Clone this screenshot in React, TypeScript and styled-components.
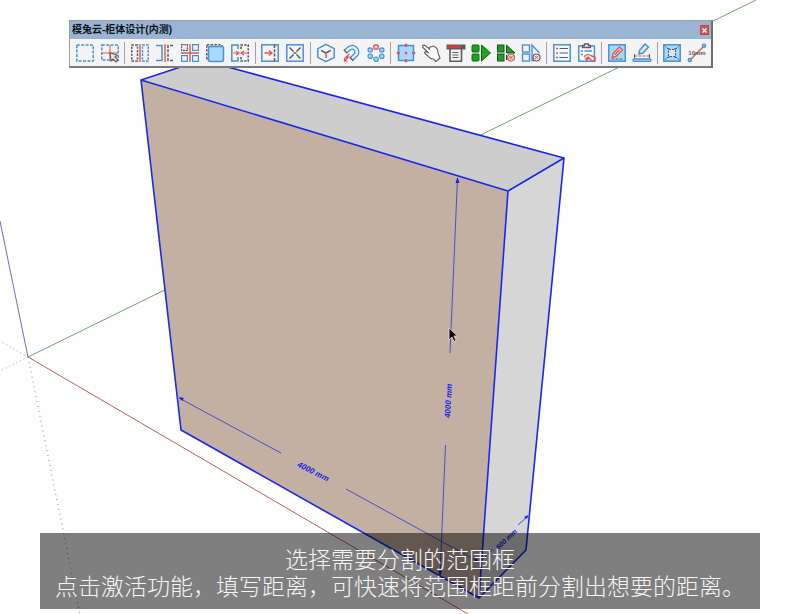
import React from "react";
import styled, { createGlobalStyle } from "styled-components";

const GlobalStyle = createGlobalStyle`
  * { box-sizing: border-box; }
  body {
    margin: 0;
    background: #fefefe;
    font-family: "Liberation Sans", "Noto Sans CJK SC", sans-serif;
  }
`;

const BLUE = "#4a90d9";
const DARK = "#5c5c60";
const RED = "#e2554d";
const PALE = "#a9d8ff";
const GREEN = "#16a51c";

const Viewport = styled.main`
  position: relative;
  display: flex;
  flex-direction: column;
  justify-content: space-between;
  min-height: 100vh;
  padding: 20px 40px 5px;
  overflow: hidden;
`;

const SceneCanvas = styled.svg`
  position: absolute;
  inset: 0;
  width: 100%;
  height: 100%;
`;

const ToolWindow = styled.section`
  position: relative;
  margin: 0 47px 0 29px;
  border: 1px solid #9a9ea5;
  border-right: 2px solid #6a6e75;
  border-bottom: 2px solid #777b81;
  background: #f4f4f5;
`;

const TitleBar = styled.header`
  display: flex;
  align-items: center;
  justify-content: space-between;
  height: 18px;
  padding: 0 2px;
  background: #9ab5d3;
`;

const Title = styled.h1`
  margin: 0;
  color: #0c1118;
  font-size: 10px;
  font-weight: 700;
  line-height: 18px;
  white-space: nowrap;
`;

const CloseButton = styled.button`
  display: grid;
  place-items: center;
  width: 9px;
  height: 10px;
  padding: 0;
  border: 1px solid #b94a44;
  background: #d2544b;
`;

const ToolStrip = styled.div`
  display: flex;
  align-items: center;
  justify-content: space-between;
  height: 27px;
  padding: 0 1px 0 2px;
`;

const ToolButton = styled.button`
  display: grid;
  place-items: center;
  width: 25px;
  height: 25px;
  padding: 0;
  border: 0;
  background: transparent;

  &:hover { background: #dbe9f8; }
`;

const Separator = styled.span`
  width: 1px;
  height: 22px;
  margin: 0 2px;
  background: #a2a2a5;
`;

const Caption = styled.p`
  position: relative;
  margin: 0;
  padding: 12px 8px 10px;
  background: rgba(0, 0, 0, 0.5);
  color: #f6f6f6;
  font-family: "Noto Sans CJK SC", sans-serif;
  font-size: 23px;
  font-weight: 300;
  line-height: 27px;
  text-align: center;
`;

const CaptionLine = styled.span`
  display: block;
`;

type Tool = { label: string; art: React.ReactNode };

const groups: Tool[][] = [
  [
    { label: "范围框", art: <rect x="0.8" y="1" width="16.4" height="16" stroke={BLUE} strokeDasharray="3 1.4" /> },
    {
      label: "选择范围",
      art: (
        <>
          <rect x="0.8" y="1" width="16.4" height="15" stroke={BLUE} strokeDasharray="3 1.4" />
          <path d="M9 1v15M1 9h16" stroke={RED} strokeWidth="1" />
          <path d="M9 9l7 2-2 2 3 3-2 2-3-3-2 2z" fill="#eee" stroke={DARK} strokeWidth="1.2" />
        </>
      ),
    },
  ],
  [
    {
      label: "左右分割",
      art: (
        <>
          <path d="M6.5 1H0.8v16h5.7z" stroke={DARK} strokeDasharray="2.4 1.2" />
          <path d="M11.5 1h5.7v16h-5.7z" stroke={BLUE} strokeDasharray="2.4 1.2" />
          <path d="M9 0v18" stroke={RED} strokeWidth="1.4" />
        </>
      ),
    },
    {
      label: "单侧分割",
      art: (
        <>
          <path d="M0 1.5h6v15H0" stroke={BLUE} />
          <path d="M17 1.5h-5v15h5" stroke={DARK} strokeDasharray="3 1.4" />
          <path d="M9 0v18" stroke={RED} strokeWidth="1.4" />
        </>
      ),
    },
    {
      label: "四向分割",
      art: (
        <>
          <path d="M.6.6h5.8v5.8H.6z" stroke={DARK} strokeWidth="1.2" strokeDasharray="2 .8" />
          <path d="M11.6.6h5.8v5.8h-5.8zM.6 11.6h5.8v5.8H.6zM11.6 11.6h5.8v5.8h-5.8z" stroke={BLUE} strokeWidth="1.2" />
          <path d="M9 0v18M0 9h18" stroke={RED} strokeWidth="1.4" />
        </>
      ),
    },
    {
      label: "填充范围",
      art: (
        <>
          <rect x="0.8" y="0.8" width="15" height="15" stroke={DARK} strokeDasharray="2.4 1.4" />
          <rect x="2.5" y="2.5" width="15" height="15" rx="1.5" fill={PALE} stroke={BLUE} />
        </>
      ),
    },
    {
      label: "合并",
      art: (
        <>
          <path d="M7 5V1H.8v16H7v-4" stroke={BLUE} />
          <path d="M10 5V1h7.2v16H10v-4" stroke={DARK} strokeDasharray="2.4 1.2" />
          <path d="M2 9h5M16 9h-5M5 7l3 2-3 2M13 7l-3 2 3 2" stroke={RED} strokeWidth="1.2" />
        </>
      ),
    },
  ],
  [
    {
      label: "前分割",
      art: (
        <>
          <rect x="0.8" y="0.8" width="16.4" height="16.4" stroke={BLUE} />
          <path d="M13.5 1v16" stroke={DARK} strokeDasharray="3 1.3" />
          <path d="M3.5 9h7M8 6.5L11 9l-3 2.5" stroke={RED} strokeWidth="1.3" />
        </>
      ),
    },
    {
      label: "交叉",
      art: (
        <>
          <rect x="0.8" y="0.8" width="16.4" height="16.4" stroke={BLUE} />
          <path d="M3.5 3.5l4 4M10.5 10.5l4 4M14.5 3.5l-4 4M7.5 10.5l-4 4M7.5 9h3" stroke={DARK} />
        </>
      ),
    },
  ],
  [
    {
      label: "组件",
      art: (
        <>
          <path d="M9 .3l8.2 4.3v8.8L9 17.7.8 13.4V4.6z" stroke={BLUE} />
          <path d="M9 9L4 6.4M9 9l5-2.6" stroke={DARK} />
          <path d="M9 9v5" stroke={RED} />
        </>
      ),
    },
    {
      label: "吸附",
      art: (
        <>
          <path d="M3.5 7.5L8 3.8A4.8 4.8 0 0 1 14.3 10.3L9.5 15" stroke={BLUE} strokeWidth="5" />
          <path d="M4 7L8 3.8A4.8 4.8 0 0 1 14.3 10.3L10 14.5" stroke="#e3f3ff" strokeWidth="2.4" />
          <path d="M1.8 5.6l3.3 3.8M7.8 13.2l3.4 3.6" stroke={DARK} strokeWidth="1.3" />
          <path d="M7.5 10L3.5 13.5l3-.5-4 4M2.5 14v3h3" stroke={RED} strokeWidth="1.2" />
        </>
      ),
    },
    {
      label: "阵列",
      art: (
        <>
          {[[3.2, 6], [3.2, 12.2], [9, 15.2], [14.8, 12.2], [14.8, 6]].map(([x, y]) => (
            <circle key={`${x}-${y}`} cx={x} cy={y} r="2.2" fill={PALE} stroke={BLUE} strokeWidth="1.2" />
          ))}
          <circle cx="9" cy="3" r="2.4" fill="#f7cfcb" stroke={RED} strokeWidth="1.2" />
        </>
      ),
    },
  ],
  [
    {
      label: "控制点",
      art: (
        <>
          <rect x="1.5" y="1.5" width="15" height="15" fill={PALE} stroke={BLUE} />
          <path d="M8 0h2v2.5H8zM8 15.5h2V18H8zM0 8h2.500v2H0zM15.500 8H18v2h-2.500zM8 8h2v2H8z" fill={RED} stroke={RED} strokeWidth=".5" />
        </>
      ),
    },
    {
      label: "拾取",
      art: <path d="M1 1.5c1-1 2 0 3 .8L7.500 5C7 3.500 8 2.500 9 3l2-1 2 1c2 1 3 3 3 6l2 5-4 3.500-2.500-2.500c-3 0-4-1-5.500-3L3 9.500C2 8.500 3 7.500 4.200 8L6 8.500 1.500 4C.5 3 .5 2 1 1.500z" fill="#fff" stroke={DARK} strokeWidth="1.1" />,
    },
    {
      label: "属性面板",
      art: (
        <>
          <path d="M3 5v12.200h11.500V5" stroke={DARK} strokeWidth="1.6" />
          <path d="M-.5.500h19v5h-19z" fill={DARK} stroke="none" />
          <path d="M.5 1.500H14V4H.5z" fill="#dc3a32" stroke="none" />
          <path d="M5.500 8.500h6M5.500 11h6M5.500 13.500h6" stroke={DARK} strokeWidth="1.1" />
        </>
      ),
    },
    {
      label: "批量生成",
      art: (
        <g fill={GREEN} stroke="#146319" strokeWidth="1">
          <rect x="0" y="1" width="7" height="7" rx="1" />
          <rect x="0" y="10" width="7" height="7" rx="1" />
          <path d="M9.5 1l9 8-9 8z" />
        </g>
      ),
    },
    {
      label: "停止生成",
      art: (
        <>
          <g fill={GREEN} stroke="#2b4a2b" strokeWidth="1">
            <rect x="0.5" y="1" width="6.500" height="7" />
            <rect x="0.5" y="10" width="6.500" height="7" />
            <path d="M9.500 1l8.500 8H9.500zM9.500 11v5" />
          </g>
          <circle cx="14" cy="13.5" r="3.5" fill="#f6cac5" stroke="#b46b68" strokeWidth="1.2" />
          <path d="M12.500 12l3 3M15.500 12l-3 3" stroke={RED} strokeWidth="1" />
        </>
      ),
    },
    {
      label: "取消生成",
      art: (
        <>
          <g stroke={BLUE} strokeWidth="1.4">
            <rect x="0.5" y="1" width="7" height="7" />
            <rect x="0.5" y="10" width="7" height="7" />
            <path d="M12 16.500H10V1l7.500 8" />
          </g>
          <circle cx="14.5" cy="13.5" r="3.5" fill="#f8e7e5" stroke={DARK} strokeWidth="1.2" />
          <path d="M13 12l3 3M16 12l-3 3" stroke={RED} strokeWidth="1" />
        </>
      ),
    },
  ],
  [
    {
      label: "列表",
      art: (
        <>
          <rect x="0.8" y="0.8" width="16.4" height="16.4" fill="#f4fbff" stroke={BLUE} />
          <path d="M3 4.500h2M3 9h2M3 13.500h2" stroke={RED} />
          <path d="M6.500 4.500H15M6.500 9H15M6.500 13.500H15" stroke={DARK} strokeWidth="1.2" />
        </>
      ),
    },
    {
      label: "清单",
      art: (
        <>
          <rect x="0.8" y="2" width="15.6" height="15.2" fill="#f4fbff" stroke={BLUE} />
          <path d="M4.500 3.500h8V1.500h-2V0h-4v1.500h-2z" fill="#eee" stroke={DARK} strokeWidth="1.3" />
          <path d="M3 7h2M6.500 7H14M3 10.500h2" stroke={BLUE} />
          <path d="M6 13c2-3 5-3 8-1l3 1v4h-3l-3-3-3 3M7 15l4-2" stroke={RED} strokeWidth="1.4" />
        </>
      ),
    },
  ],
  [
    {
      label: "编辑范围",
      art: (
        <>
          <rect x="0.8" y="0.8" width="16.4" height="16.4" fill={PALE} stroke={BLUE} />
          <path d="M5 9.500L11.500 3l3 3L8 12.500l-4 1zM6.500 11l5-5" fill="#fae0dd" stroke={RED} strokeWidth="1.3" />
          <path d="M3.500 15h11" stroke={DARK} strokeWidth="1.2" strokeDasharray="3 1" />
        </>
      ),
    },
    {
      label: "编辑尺寸",
      art: (
        <>
          <path d="M6.500 6.500L12 0l3.500 3L10 9l-4 1z" fill="#d4ecff" stroke={BLUE} strokeWidth="1.500" />
          <path d="M1.500 12h15" stroke={RED} strokeWidth="1.2" strokeDasharray="3 1" />
          <path d="M1.500 10v4M16.500 10v4" stroke={DARK} strokeWidth="1.1" />
          <rect x="0" y="15" width="18" height="2.4" rx="1" fill={PALE} stroke={BLUE} strokeWidth="1.3" />
        </>
      ),
    },
  ],
  [
    {
      label: "内缩",
      art: (
        <>
          <rect x="0.8" y="0.8" width="16.4" height="16.4" fill={PALE} stroke={BLUE} />
          <path d="M1 1l4 4M17 1l-4 4M1 17l4-4M17 17l-4-4" stroke={BLUE} strokeWidth="1" />
          <path d="M5.500 5.500h7v7h-7z" fill="#cdeaff" stroke={DARK} strokeWidth="1.1" strokeDasharray="2.5 1" />
          <path d="M4 4.500h2.500M11.500 4.500H14M4 13.500h2.500M11.500 13.500H14" stroke={DARK} strokeWidth="1.1" />
        </>
      ),
    },
    {
      label: "测量距离",
      art: (
        <>
          <path d="M2.500 15.500l13-13" stroke={RED} />
          <text x="9" y="11" fill={DARK} stroke="none" fontFamily="Liberation Sans" fontWeight="700" fontSize="6" textAnchor="middle">10mm</text>
          <circle cx="1.8" cy="16" r="1.5" fill="#d9efff" stroke={BLUE} />
          <circle cx="16" cy="1.8" r="1.5" fill="#d9efff" stroke={BLUE} />
        </>
      ),
    },
  ],
];

const ToolIcon = ({ children }: { children: React.ReactNode }) => (
  <svg width="18" height="18" viewBox="0 0 18 18" fill="none" strokeWidth="1.5" overflow="visible" aria-hidden="true">
    {children}
  </svg>
);

const Scene = () => (
  <SceneCanvas viewBox="0 0 800 614" preserveAspectRatio="xMidYMid slice" fill="none" role="img" aria-label="4000 mm × 4000 mm × 600 mm">
    <g strokeWidth="1">
      <path d="M28 357L756 0" stroke="#6da66d" />
      <path d="M28 357L468 614" stroke="#b7605a" />
      <path d="M28 357L0 221" stroke="#6d6dbe" />
      <path d="M28 357L0 371" stroke="#92bd92" strokeDasharray="1 3" />
      <path d="M28 357L0 341" stroke="#b98e8e" strokeDasharray="1 3" />
      <path d="M28 357L80 614" stroke="#8181a7" strokeDasharray="1 4" />
    </g>
    <path d="M141 80L202 60L564 158L508 191Z" fill="#cdcdcd" />
    <path d="M508 191L564 158L526 550L479 598Z" fill="#d6d6d6" />
    <path d="M141 80L508 191L479 598L181 430Z" fill="#c4b0a3" />
    <path d="M141 80L202 60L564 158L526 550L479 598L181 430ZL508 191L564 158M508 191L479 598" stroke="#1a28ee" strokeWidth="1.6" strokeLinejoin="round" />
    <g stroke="#4550d2" strokeWidth="1">
      <path d="M457.5 178L450 353M445.5 445L440 576" />
      <path d="M179 398L281 453M346 489L479 562" />
      <path d="M480 562L493 549M518 525L528 516" />
    </g>
    <g fill="#1522e6">
      <path d="M457.5 177l2 6h-4zM440 577l-2-6h4zM179 397l5 1-2 3zM479 562l-5-1 2-3zM528 515l-1 4-3-2z" />
      <g fontFamily="Liberation Sans" fontWeight="700" fontStyle="italic" fontSize="8" textAnchor="middle">
        <text transform="translate(312 474) rotate(27)">4000 mm</text>
        <text transform="translate(451 401) rotate(-87)">4000 mm</text>
        <text transform="translate(508 541) rotate(-43)" fontSize="7">600 mm</text>
      </g>
    </g>
    <path d="M449 328v12l3-3 2 4.5 2-1-2-4.5h3.5z" fill="#0d0d0d" stroke="#e9dfd9" strokeWidth=".8" />
  </SceneCanvas>
);

export default function App() {
  return (
    <>
      <GlobalStyle />
      <Viewport>
        <Scene />
        <ToolWindow>
          <TitleBar>
            <Title>模兔云-柜体设计(内测)</Title>
            <CloseButton aria-label="关闭">
              <svg width="5" height="5" viewBox="0 0 5 5" aria-hidden="true">
                <path d="M.5.5l4 4M4.5.5l-4 4" stroke="#fff" strokeWidth="1.2" />
              </svg>
            </CloseButton>
          </TitleBar>
          <ToolStrip role="toolbar">
            {groups.map((group, index) => (
              <React.Fragment key={group[0].label}>
                {index > 0 && <Separator />}
                {group.map((tool) => (
                  <ToolButton key={tool.label} aria-label={tool.label}>
                    <ToolIcon>{tool.art}</ToolIcon>
                  </ToolButton>
                ))}
              </React.Fragment>
            ))}
          </ToolStrip>
        </ToolWindow>
        <Caption>
          <CaptionLine>选择需要分割的范围框</CaptionLine>
          <CaptionLine>点击激活功能，填写距离，可快速将范围框距前分割出想要的距离。</CaptionLine>
        </Caption>
      </Viewport>
    </>
  );
}
